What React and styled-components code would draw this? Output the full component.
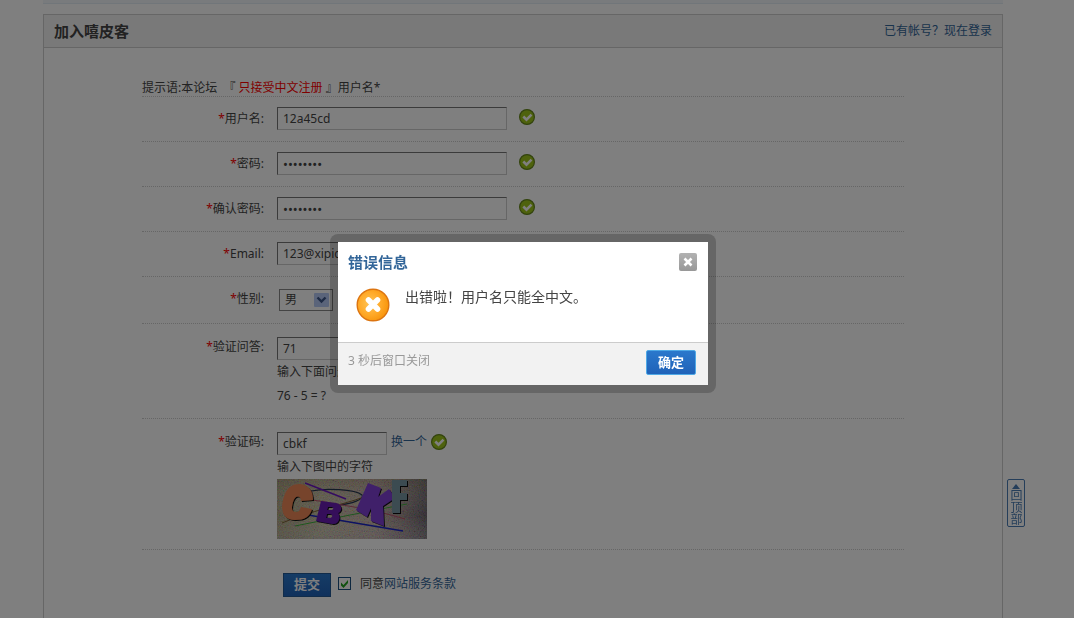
import React, { useState } from 'react'
import styled, { createGlobalStyle } from 'styled-components'

const GlobalStyle = createGlobalStyle`
* {
  box-sizing: border-box;
}
body {
  margin: 0;
  background: #fff;
  color: #444;
  font: 12px/24px "Noto Sans", "Noto Sans CJK SC", sans-serif;
}
input, select, button {
  font: inherit;
  color: inherit;
}
`;

const Page = styled.div`
  height: 100vh;
  overflow: hidden;
  display: flex;
  flex-direction: column;
  padding: 0 71px 0 43px;
`;

const TopStrip = styled.div`
  flex: none;
  height: 4px;
  margin: 0 0 10px;
  background: #f2f6fa;
  border-bottom: 1px solid #e2ecf5;
`;

const Panel = styled.section`
  flex: 1 0 auto;
  border: 1px solid #cdcdcd;
  border-bottom: none;
`;

const PanelHead = styled.header`
  display: flex;
  align-items: center;
  justify-content: space-between;
  height: 33px;
  padding: 0 10px;
  background: #f2f2f2;
  border-bottom: 1px solid #cdcdcd;
`;

const PanelTitle = styled.h1`
  margin: 0;
  font-size: 15px;
`;

const Link = styled.a`
  color: #369;
  text-decoration: none;
  &:hover {
    text-decoration: underline;
  }
`;

const Form = styled.form`
  max-width: 762px;
  margin: 0 auto;
`;

const Hint = styled.p`
  margin: 0;
  padding: 28px 0 0;
  height: 49px;
  border-bottom: 1px dotted #cdcdcd;
  white-space: pre;
`;

const Red = styled.span`
  color: #f00;
`;

const Row = styled.div`
  display: grid;
  grid-template-columns: 122px 1fr;
  column-gap: 13px;
  padding: ${p => p.$top || 10}px 0 ${p => p.$bottom || 10}px;
  border-bottom: 1px dotted #cdcdcd;
`;

const Label = styled.label`
  text-align: right;
  line-height: ${p => (p.$raised ? 20 : 24)}px;
  white-space: nowrap;
`;

const Line = styled.div`
  display: flex;
  align-items: flex-start;
  gap: ${p => p.$gap || 12}px;
  height: 23px;
  line-height: 20px;
  svg {
    margin-top: 2px;
  }
`;

const TextInput = styled.input`
  width: ${p => p.$width || 230}px;
  height: 23px;
  padding: 0 5px;
  border: 1px solid;
  border-color: #777 #ccc #ccc #777;
  background: transparent;
  outline: none;
  &[type="password"] {
    font-size: 13px;
  }
`;

const SelectBox = styled.div`
  position: relative;
  width: 54px;
  margin-left: 2px;
  select {
    display: block;
    width: 100%;
    height: 22px;
    padding: 0 5px;
    appearance: none;
    border: 1px solid #888;
    border-radius: 0;
    background: transparent;
    line-height: 20px;
  }
  svg {
    position: absolute;
    top: 4px;
    right: 4px;
    pointer-events: none;
  }
`;

const Captcha = styled.svg`
  display: block;
`;

const SubmitLine = styled.div`
  display: flex;
  align-items: flex-start;
  gap: 7px;
  padding: 23px 0 0 141px;
`;

const Submit = styled.button`
  width: 48px;
  height: 24px;
  padding: 0 0 2px;
  border: 1px solid #235994;
  background: linear-gradient(#2a78cc, #2062b8);
  color: #fff;
  font-size: 13px;
  font-weight: bold;
  line-height: 20px;
  cursor: pointer;
`;

const Agree = styled.div`
  display: flex;
  align-items: center;
  gap: 9px;
  line-height: 21px;
`;

const Check = styled.input`
  appearance: none;
  display: block;
  width: 13px;
  height: 13px;
  margin: 0;
  border: 1px solid #1c5180;
  &:checked {
    background: url("data:image/svg+xml,%3Csvg xmlns='http://www.w3.org/2000/svg' viewBox='0 0 11 11'%3E%3Cpath d='M2 4.5v3L4.5 10 9 5V2L4.5 7z' fill='%2321a121'/%3E%3C/svg%3E");
  }
`;

const BackTop = styled.a`
  position: fixed;
  top: 479px;
  left: calc(100% - 67px);
  display: flex;
  flex-direction: column;
  align-items: center;
  width: 18px;
  height: 48px;
  padding-top: 4px;
  border: 1px solid #4a7db5;
  border-radius: 2px;
  color: #4a7db5;
  font-family: "Noto Sans CJK SC", sans-serif;
  line-height: 16px;
  text-decoration: none;
  svg {
    flex: none;
  }
  span {
    writing-mode: vertical-rl;
    white-space: nowrap;
  }
`;

const Overlay = styled.div`
  position: fixed;
  inset: 0;
  display: flex;
  align-items: center;
  justify-content: center;
  padding: 9px 28px 0 0;
  background: rgba(0, 0, 0, .5);
`;

const Dialog = styled.div`
  width: 386px;
  border: 8px solid rgba(0, 0, 0, .2);
  border-radius: 8px;
  background: #fff;
  background-clip: padding-box;
`;

const DialogHead = styled.div`
  display: flex;
  align-items: center;
  justify-content: space-between;
  height: 40px;
  padding: 0 11px 0 10px;
  h2 {
    margin: 0;
    color: #369;
    font-size: 15px;
    line-height: 22px;
  }
`;

const Close = styled.button`
  display: flex;
  align-items: center;
  justify-content: center;
  width: 18px;
  height: 18px;
  padding: 0;
  border: none;
  border-radius: 2px;
  background: linear-gradient(#b2b2b2, #989898);
  cursor: pointer;
`;

const DialogBody = styled.div`
  display: flex;
  gap: 15px;
  height: 60px;
  padding: 6px 18px 0;
  svg {
    flex: none;
  }
  p {
    margin: 0;
    font-size: 14px;
    line-height: 18px;
  }
`;

const DialogFoot = styled.div`
  display: flex;
  justify-content: space-between;
  height: 43px;
  padding: 7px 12px 0 10px;
  border-top: 1px solid #ccc;
  background: #f2f2f2;
  color: #999;
  line-height: 22px;
`;

const Ok = styled(Submit)`
  width: 50px;
  height: 25px;
  border-color: #4fa9e6;
  border-radius: 2px;
`;

function Tick() {
  return (
    <svg width="17" height="17" viewBox="0 0 17 17">
      <circle cx="8" cy="8" r="7.4" fill="#9cc41a" stroke="#65851a" strokeWidth="1.2" />
      <path d="M4.3 7.5l3.2 3.2 5-5" fill="none" stroke="#fff" strokeWidth="2.6" />
    </svg>
  )
}

function Field(props) {
  return (
    <Row $top={props.top} $bottom={props.bottom}>
      <Label htmlFor={props.id} $raised={props.raised}><Red>*</Red>{props.label}:</Label>
      <div>{props.children}</div>
    </Row>
  )
}

function CaptchaImage() {
  return (
    <Captcha width="150" height="60" viewBox="0 0 150 60" role="img" aria-label="CBKF">
      <defs>
        <linearGradient id="shade">
          <stop offset="0" stopColor="#a89a6c" />
          <stop offset=".3" stopColor="#cbc09c" />
          <stop offset=".65" stopColor="#c9ada0" />
          <stop offset=".85" stopColor="#8c7674" />
          <stop offset="1" stopColor="#4c4450" />
        </linearGradient>
        <linearGradient id="fade" x1="0" y1="0" x2="0" y2="1">
          <stop offset="0" stopColor="#8c7c58" stopOpacity=".4" />
          <stop offset=".6" stopColor="#fff" stopOpacity="0" />
          <stop offset="1" stopColor="#c8c8d0" stopOpacity=".35" />
        </linearGradient>
        <filter id="grain" x="0" y="0" width="100%" height="100%">
          <feTurbulence type="fractalNoise" baseFrequency=".8" numOctaves="2" seed="4" />
          <feColorMatrix values="1.6 0 0 0 -.3  0 1.6 0 0 -.3  0 0 1.6 0 -.3  0 0 0 0 .28" />
        </filter>
        <filter id="drop">
          <feDropShadow dx="1" dy="1" stdDeviation=".3" floodColor="#111" />
        </filter>
      </defs>
      <rect width="150" height="60" fill="url(#shade)" />
      <rect width="150" height="60" fill="url(#fade)" />
      <rect width="150" height="60" filter="url(#grain)" />
      <g fill="none" strokeWidth="1">
        <path d="M34 12c14-3 44-2 51 4 3 4-10 9-24 10" stroke="#26364f" strokeWidth="1.2" />
        <path d="M18 47c40-8 80-16 112-22" stroke="#3fae3f" />
        <path d="M5 44c28-12 60-18 82-26" stroke="#7d5f35" />
        <path d="M30 20c34 6 66 10 98 20" stroke="#b8506c" />
        <path d="M31 36l95 16" stroke="#1a24c4" strokeWidth="1.5" />
      </g>
      <g filter="url(#drop)">
        <path d="M36 21l-12 1c0-6-6-6-8 1-2 7-1 10 3 10 3 0 4-2 5-5l11 2c-2 8-8 11-17 11C7 41 3 33 6 21 9 9 14 5 23 5c9 1 13 7 13 16z" fill="#ee8858" />
        <path d="M44 22l15 2c6 1 7 8 2 10 3 4 1 11-5 11l-17-3z M51 28l-1 3h5c2-1 2-3-1-3z M50 35l-1 4h4c3-1 3-4 0-4z" fill="#6a1fb4" fillRule="evenodd" />
        <path d="M91 4l13 5-3 9 11-8 6 9-12 8 1 20-13-5 0-13-4 9-11-7z" fill="#8140d4" />
        <path d="M115 1h15v6h-7v7h7v7h-7v13h-8z" fill="#7896a3" />
      </g>
      <path d="M28 4l41 16" fill="none" stroke="#6a17c0" strokeWidth="1.5" />
    </Captcha>
  )
}

function ErrorDialog(props) {
  return (
    <Overlay>
      <Dialog role="dialog" aria-labelledby="dialog-title">
        <DialogHead>
          <h2 id="dialog-title">错误信息</h2>
          <Close type="button" aria-label="关闭" onClick={props.onClose}>
            <svg width="10" height="10" viewBox="0 0 10 10">
              <path d="M1.5 1.5l7 7M8.5 1.5l-7 7" stroke="#fff" strokeWidth="2.6" />
            </svg>
          </Close>
        </DialogHead>
        <DialogBody>
          <svg width="34" height="34" viewBox="0 0 34 34">
            <defs>
              <radialGradient id="orange" cx=".4" cy=".45" r=".6">
                <stop offset="0" stopColor="#ffc455" />
                <stop offset=".6" stopColor="#ffa928" />
                <stop offset="1" stopColor="#f8950c" />
              </radialGradient>
            </defs>
            <circle cx="17" cy="17" r="15.8" fill="url(#orange)" stroke="#dc7410" strokeWidth="1.4" />
            <path d="M12.5 12l9 9M21.5 12l-9 9" stroke="#fff" strokeWidth="5.6" strokeLinecap="round" />
          </svg>
          <p>出错啦！用户名只能全中文。</p>
        </DialogBody>
        <DialogFoot>
          <span>3 秒后窗口关闭</span>
          <Ok type="button" onClick={props.onClose}>确定</Ok>
        </DialogFoot>
      </Dialog>
    </Overlay>
  )
}

function App() {
  const [open, setOpen] = useState(true);
  return (
    <>
      <GlobalStyle />
      <Page>
        <TopStrip />
        <Panel>
          <PanelHead>
            <PanelTitle>加入嘻皮客</PanelTitle>
            <Link href="#login">已有帐号？现在登录</Link>
          </PanelHead>
          <Form onSubmit={(e) => e.preventDefault()}>
            <Hint>提示语:本论坛  『 <Red>只接受中文注册</Red> 』用户名*</Hint>
            <Field id="username" label="用户名">
              <Line><TextInput id="username" defaultValue="12a45cd" /><Tick /></Line>
            </Field>
            <Field id="password" label="密码">
              <Line><TextInput id="password" type="password" defaultValue="12345678" /><Tick /></Line>
            </Field>
            <Field id="password2" label="确认密码">
              <Line><TextInput id="password2" type="password" defaultValue="12345678" /><Tick /></Line>
            </Field>
            <Field id="email" label="Email">
              <Line><TextInput id="email" defaultValue="123@xipic" /></Line>
            </Field>
            <Field id="gender" label="性别" top={12} bottom={12} raised>
              <SelectBox>
                <select id="gender" defaultValue="男">
                  <option>男</option>
                  <option>女</option>
                </select>
                <svg width="15" height="14" viewBox="0 0 15 14">
                  <rect width="15" height="14" rx="1" fill="#b4c8f4" />
                  <path d="M3.5 4.5l4 4 4-4" fill="none" stroke="#3c5688" strokeWidth="2.4" />
                </svg>
              </SelectBox>
            </Field>
            <Field id="answer" label="验证问答" top={13} raised>
              <Line><TextInput id="answer" defaultValue="71" /></Line>
              <div>输入下面问题</div>
              <div>76 - 5 = ?</div>
            </Field>
            <Field id="captcha" label="验证码" top={13} raised>
              <Line $gap={4}>
                <TextInput id="captcha" $width={110} defaultValue="cbkf" />
                <Link href="#change">换一个</Link>
                <Tick />
              </Line>
              <div>输入下图中的字符</div>
              <CaptchaImage />
            </Field>
            <SubmitLine>
              <Submit type="submit">提交</Submit>
              <Agree>
                <Check id="agree" type="checkbox" defaultChecked />
                <span><label htmlFor="agree">同意</label><Link href="#terms">网站服务条款</Link></span>
              </Agree>
            </SubmitLine>
          </Form>
        </Panel>
      </Page>
      <BackTop href="#top">
        <svg width="8" height="5" viewBox="0 0 8 5"><path d="M4 0l4 5H0z" fill="#4a7db5" /></svg>
        <span>回顶部</span>
      </BackTop>
      {open && <ErrorDialog onClose={() => setOpen(false)} />}
    </>
  )
}

export default App
